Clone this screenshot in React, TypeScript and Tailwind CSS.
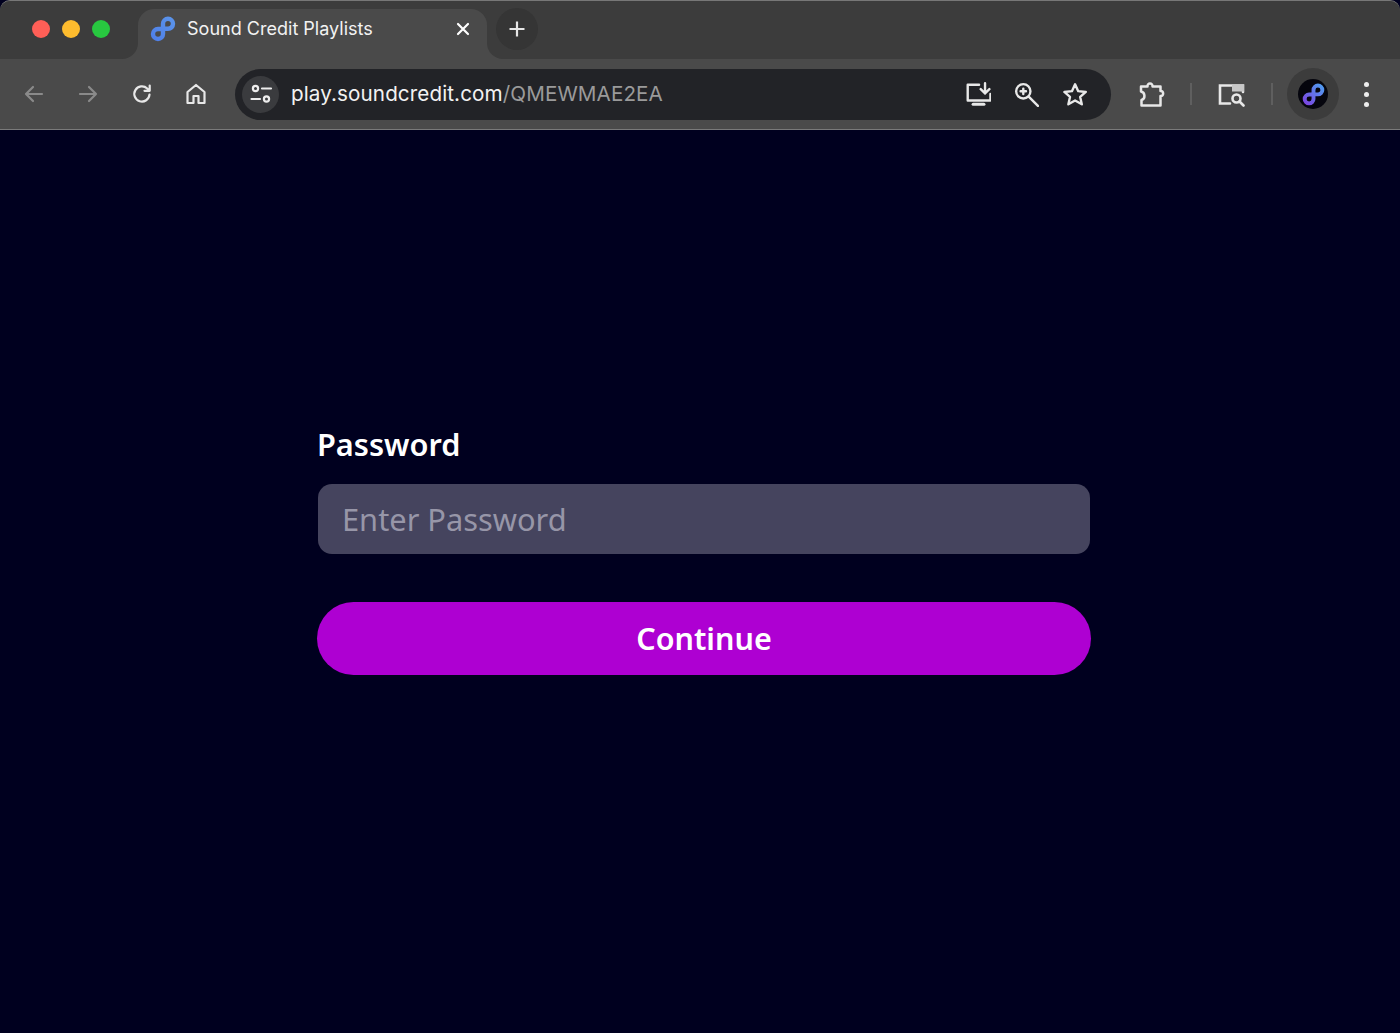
import React from 'react';

function LogoMark({ className, colorA, colorB, id }: { className?: string; colorA: string; colorB: string; id: string }) {
  return (
    <svg viewBox="0 0 26 26" className={className} fill="none">
      <defs>
        <linearGradient id={id} x1="3" y1="23" x2="23" y2="3" gradientUnits="userSpaceOnUse">
          <stop offset="0" stopColor={colorA} />
          <stop offset="1" stopColor={colorB} />
        </linearGradient>
      </defs>
      <path
        d="M13 7.800a5 5 0 1 1 5 5H15.500M13 7.800V18a5 5 0 1 1-5-5H10.500"
        stroke={`url(#${id})`}
        strokeWidth="4.400"
        strokeLinecap="round"
      />
    </svg>
  );
}

function ToolIcon({ className, children }: { className?: string; children: React.ReactNode }) {
  return (
    <svg viewBox="0 0 24 24" className={className} fill="none" stroke="currentColor" strokeWidth="2.200" strokeLinecap="round" strokeLinejoin="round">
      {children}
    </svg>
  );
}

export default function App() {
  return (
    <div className="h-[1033px] w-[1400px] overflow-hidden bg-[#00001f] font-['Inter',sans-serif]">
      {/* Browser chrome */}
      <div className="rounded-t-[10px] border-t border-[#777] bg-[#4a4a4a]">
        {/* Tab strip */}
        <div className="flex h-[58px]">
          <div className="flex w-[138px] items-center gap-[12px] rounded-tl-[10px] rounded-br-[16px] bg-[#3c3c3c] pb-[2px] pl-[32px]">
            <span className="h-[18px] w-[18px] rounded-full bg-[#ff5f57]" />
            <span className="h-[18px] w-[18px] rounded-full bg-[#febc2e]" />
            <span className="h-[18px] w-[18px] rounded-full bg-[#28c840]" />
          </div>
          <div className="w-[349px] bg-[#3c3c3c] pt-[8px]">
            <div className="flex h-[50px] items-center rounded-t-[16px] bg-[#4a4a4a] pr-[17px] pb-[10px] pl-[12px]">
              <LogoMark id="tab-logo" className="h-[26px] w-[26px]" colorA="#4f7fe8" colorB="#5a93ea" />
              <span className="ml-[11px] text-[18.050px] text-[#f2f2f2]">Sound Credit Playlists</span>
              <svg viewBox="0 0 14 14" className="ml-auto h-[14px] w-[14px] text-white" fill="none" stroke="currentColor" strokeWidth="2.200" strokeLinecap="round">
                <path d="M2 2l10 10M12 2L2 12" />
              </svg>
            </div>
          </div>
          <div className="flex flex-1 items-center rounded-tr-[10px] rounded-bl-[16px] bg-[#3c3c3c] pb-[2px] pl-[9px]">
            <div className="flex h-[42px] w-[42px] items-center justify-center rounded-full bg-[#353535]">
              <svg viewBox="0 0 18 18" className="h-[18px] w-[18px] text-[#e6e6e6]" fill="none" stroke="currentColor" strokeWidth="2.200">
                <path d="M9 1.500v15M1.500 9h15" />
              </svg>
            </div>
          </div>
        </div>

        {/* Toolbar */}
        <div className="flex h-[71px] items-center border-b border-[#7a7a7a]">
          <div className="flex w-[235px] items-center pl-[22px] text-[#e8e8e8]">
            <ToolIcon className="h-[24px] w-[24px] text-[#8a8a8a]"><path d="M20 12H4M11 5l-7 7 7 7" /></ToolIcon>
            <ToolIcon className="ml-[30px] h-[24px] w-[24px] text-[#8a8a8a]"><path d="M4 12h16M13 5l7 7-7 7" /></ToolIcon>
            <ToolIcon className="ml-[30px] h-[24px] w-[24px]"><path d="M19.500 12.500a7.600 7.600 0 1 1-2.300-6l2.300 2.200M19.700 3.600v5.200h-5.200" /></ToolIcon>
            <ToolIcon className="ml-[30px] h-[24px] w-[24px]"><path d="M3.500 10 12 3l8.500 7v11h-6v-7h-5v7h-6z" /></ToolIcon>
          </div>

          <div className="flex h-[51px] w-[876px] items-center rounded-full bg-[#222327] pr-[24px] pl-[7px]">
            <div className="flex h-[37px] w-[37px] items-center justify-center rounded-full bg-[#3a3b3e] text-[#ededed]">
              <ToolIcon className="h-[24px] w-[24px]">
                <circle cx="6.500" cy="6.500" r="2.600" />
                <path d="M13 6.500h9M2.500 17H11" />
                <circle cx="17.500" cy="17" r="2.600" />
              </ToolIcon>
            </div>
            <div className="mt-px ml-[12px] text-[20.650px] tracking-[0.1px] text-[#f2f2f2]">
              play.soundcredit.com<span className="text-[#9a9a9a]">/QMEWMAE2EA</span>
            </div>
            <div className="ml-auto flex items-center gap-[22px] text-[#e8e8e8]">
              <ToolIcon className="h-[26px] w-[26px]">
                <path d="M13 3.500H2.500V18h21v-6" />
                <path d="M7.500 21.500h10" strokeWidth="2.800" />
                <path d="M18.500 2v9.500M14.500 7.500l4 4 4-4" />
              </ToolIcon>
              <ToolIcon className="h-[26px] w-[26px]">
                <circle cx="9.500" cy="9.500" r="6.600" />
                <path d="M14.500 14.500 23 23M9.500 7v5M7 9.500h5" />
              </ToolIcon>
              <ToolIcon className="h-[26px] w-[26px]">
                <path d="M13 3l2.900 6.400 7 .7-5.200 4.600 1.500 6.800-6.200-3.500-6.200 3.500 1.500-6.800L3.100 10.100l7-.7z" />
              </ToolIcon>
            </div>
          </div>

          <div className="flex flex-1 items-center pl-[27px] text-[#e8e8e8]">
            <svg viewBox="0 0 28 28" className="h-[28px] w-[28px]" fill="none" stroke="currentColor" strokeWidth="2.500" strokeLinejoin="round">
              <path d="M3 6.500h6.500C9 2.500 15 2.500 14.500 6.500H22.500V11c3.500-.5 3.500 5.500 0 5V25.500H3.500V20C7.500 19 7.500 12.500 3 11.500z" />
            </svg>
            <span className="ml-[24px] h-[22px] w-[2px] bg-[#5f5f5f]" />
            <svg viewBox="0 0 28 28" className="ml-[25px] h-[28px] w-[28px]" fill="none" stroke="currentColor" strokeWidth="2.600" strokeLinecap="round">
              <path d="M13 23.500H3V5.500h23V12" />
              <path d="M15 4.500h12v7H15z" fill="#c8c8c8" stroke="none" />
              <circle cx="19.500" cy="18.500" r="4" />
              <path d="M22.500 21.500 26.500 25.500" />
            </svg>
            <span className="ml-[26px] h-[22px] w-[2px] bg-[#5f5f5f]" />
            <div className="ml-[14px] flex h-[52px] w-[52px] items-center justify-center rounded-full bg-[#3c3c3c]">
              <div className="flex h-[30px] w-[30px] items-center justify-center rounded-full bg-[#05050d]">
                <LogoMark id="avatar-logo" className="h-[23px] w-[23px]" colorA="#7b45e0" colorB="#4f9af0" />
              </div>
            </div>
            <div className="ml-[25px] flex flex-col gap-[5px]">
              <span className="h-[5px] w-[5px] rounded-full bg-[#eee]" />
              <span className="h-[5px] w-[5px] rounded-full bg-[#eee]" />
              <span className="h-[5px] w-[5px] rounded-full bg-[#eee]" />
            </div>
          </div>
        </div>
      </div>

      {/* Password form */}
      <main className="ml-[317px] w-[774px] pt-[294px] font-['Noto_Sans',sans-serif]">
        <label className="block text-[30.700px] leading-[41px] font-semibold text-white">Password</label>
        <div className="mx-px mt-[19px] flex h-[70px] items-center rounded-[14px] bg-[#45445e] px-[24px] text-[30.800px] text-[#9796a8]">
          Enter Password
        </div>
        <button className="mt-[48px] h-[73px] w-full rounded-full bg-[#ae00d2] text-[30.500px] font-semibold text-white">
          Continue
        </button>
      </main>
    </div>
  );
}
